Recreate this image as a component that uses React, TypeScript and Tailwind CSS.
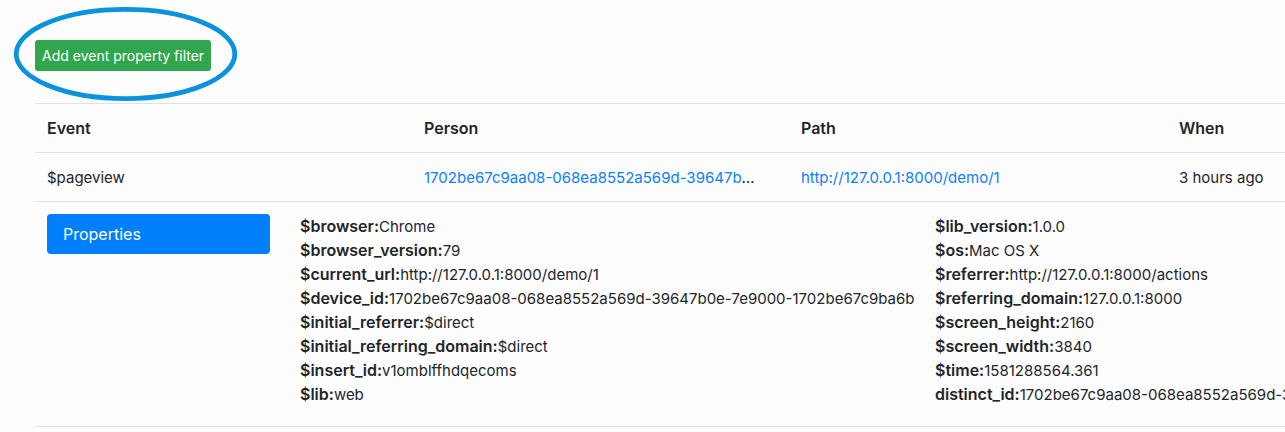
type Property = { name: string; value: string };

const DISTINCT_ID = '1702be67c9aa08-068ea8552a569d-39647b0e-7e9000-1702be67c9ba6b';

const leftProperties: Property[] = [
  { name: '$browser', value: 'Chrome' },
  { name: '$browser_version', value: '79' },
  { name: '$current_url', value: 'http://127.0.0.1:8000/demo/1' },
  { name: '$device_id', value: DISTINCT_ID },
  { name: '$initial_referrer', value: '$direct' },
  { name: '$initial_referring_domain', value: '$direct' },
  { name: '$insert_id', value: 'v1omblffhdqecoms' },
  { name: '$lib', value: 'web' },
];

const rightProperties: Property[] = [
  { name: '$lib_version', value: '1.0.0' },
  { name: '$os', value: 'Mac OS X' },
  { name: '$referrer', value: 'http://127.0.0.1:8000/actions' },
  { name: '$referring_domain', value: '127.0.0.1:8000' },
  { name: '$screen_height', value: '2160' },
  { name: '$screen_width', value: '3840' },
  { name: '$time', value: '1581288564.361' },
  { name: 'distinct_id', value: DISTINCT_ID },
];

function PropertyList({ items }: { items: Property[] }) {
  return (
    <dl className="w-[635px] shrink-0 whitespace-nowrap">
      {items.map((item) => (
        <div key={item.name} className="flex h-6 items-baseline">
          <dt className="text-base font-semibold">{item.name}:</dt>
          <dd>{item.value}</dd>
        </div>
      ))}
    </dl>
  );
}

export default function App() {
  return (
    <main className="min-h-screen overflow-x-hidden bg-[#fefdfd] pt-10 pl-[35px] font-['Inter','Liberation_Sans',sans-serif] text-[15px] leading-6 text-[#212529]">
      <div className="relative mb-8 w-fit">
        <button
          type="button"
          className="block h-[31px] rounded-[3px] bg-[#31a64f] px-[7px] text-sm text-white"
        >
          Add event property filter
        </button>
        <svg
          aria-hidden="true"
          className="pointer-events-none absolute -top-[34px] -left-[22px] h-[96px] w-[226px]"
          viewBox="0 0 226 96"
          fill="none"
        >
          <ellipse cx="112.5" cy="48" rx="109.3" ry="44.6" stroke="#0a93dc" strokeWidth="4.8" />
        </svg>
      </div>

      <table className="w-full table-fixed border-collapse border-b border-[#dee2e6] text-left">
        <colgroup>
          <col className="w-[377px]" />
          <col className="w-[377px]" />
          <col className="w-[378px]" />
          <col />
        </colgroup>
        <thead>
          <tr className="border-t border-[#dee2e6] text-base">
            <th className="p-3 font-semibold">Event</th>
            <th className="p-3 font-semibold">Person</th>
            <th className="p-3 font-semibold">Path</th>
            <th className="p-3 font-semibold">When</th>
          </tr>
        </thead>
        <tbody>
          <tr className="border-t border-[#dee2e6]">
            <td className="px-3 pt-[13px] pb-[11px]">$pageview</td>
            <td className="truncate pt-[13px] pr-7 pb-[11px] pl-3">
              <a href="#person" className="text-[#0a80fc]">
                {DISTINCT_ID}
              </a>
            </td>
            <td className="px-3 pt-[13px] pb-[11px]">
              <a href="#path" className="text-[#0a80fc]">
                http://127.0.0.1:8000/demo/1
              </a>
            </td>
            <td className="pt-[13px] pb-[11px] pl-3 whitespace-nowrap">3 hours ago</td>
          </tr>
          <tr className="border-t border-[#dee2e6]">
            <td colSpan={4} className="overflow-hidden py-3 pl-3">
              <div className="mb-2 flex items-start">
                <a
                  href="#properties"
                  className="mr-[30px] w-[223px] shrink-0 rounded bg-[#007ffb] px-4 py-2 text-base text-white"
                >
                  Properties
                </a>
                <PropertyList items={leftProperties} />
                <PropertyList items={rightProperties} />
              </div>
            </td>
          </tr>
        </tbody>
      </table>
    </main>
  );
}
